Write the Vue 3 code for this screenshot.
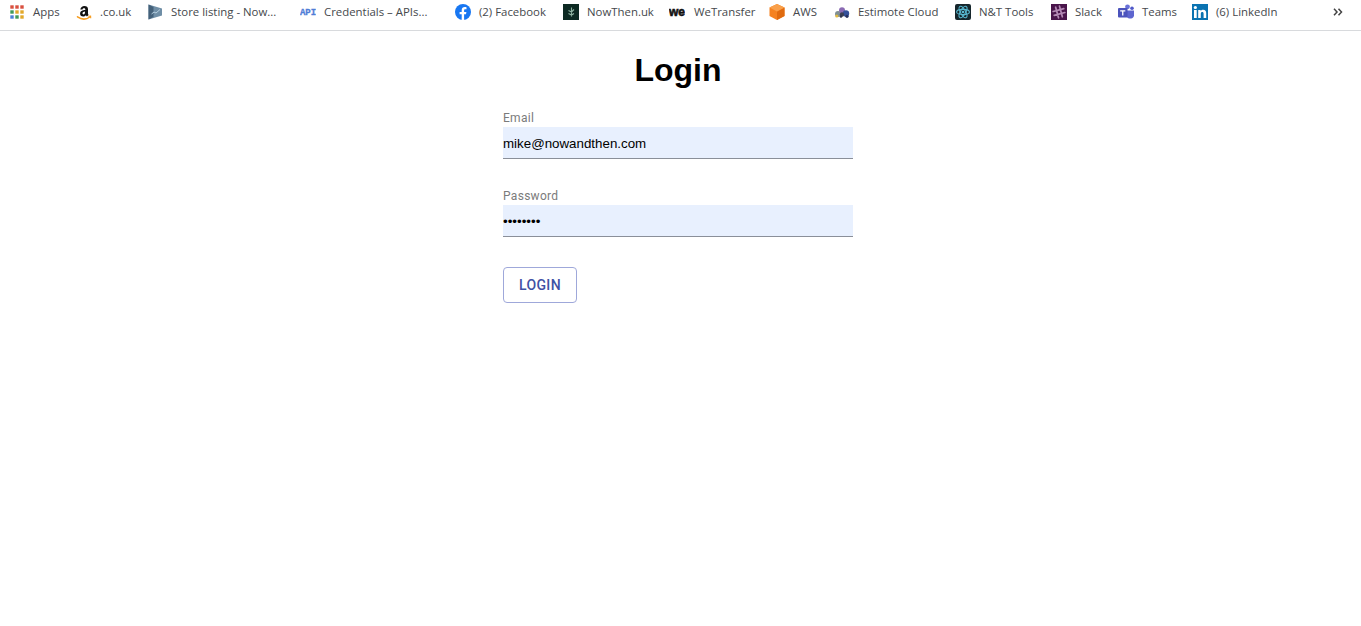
<script setup>
const items = [
  { icon: 'apps', label: 'Apps' },
  { icon: 'amazon', label: '.co.uk' },
  { icon: 'play', label: 'Store listing - Now...' },
  { icon: 'api', label: 'Credentials – APIs...' },
  { icon: 'fb', label: '(2) Facebook' },
  { icon: 'nt', label: 'NowThen.uk' },
  { icon: 'we', label: 'WeTransfer' },
  { icon: 'aws', label: 'AWS' },
  { icon: 'est', label: 'Estimote Cloud' },
  { icon: 'react', label: 'N&T Tools' },
  { icon: 'slack', label: 'Slack' },
  { icon: 'teams', label: 'Teams' },
  { icon: 'li', label: '(6) LinkedIn' }
]
const appDots = ['#d9503f','#d9503f','#d9503f','#3f9a5a','#e2a92b','#e2a92b','#4a82d8','#3f9a5a','#e2a92b']
</script>

<template>
  <div class="page">
    <nav class="bar">
      <div v-for="it in items" :key="it.label" class="mark" :class="'m-' + it.icon">
        <svg class="ic" viewBox="0 0 16 16" width="16" height="16">
          <template v-if="it.icon === 'apps'">
            <rect v-for="(c, i) in appDots" :key="i" :x="1.3 + (i % 3) * 5" :y="1.3 + Math.floor(i / 3) * 5" width="3.4" height="3.4" :fill="c" />
          </template>
          <template v-else-if="it.icon === 'amazon'">
            <path d="M4.300 5.600C4.700 3.300 6.300 2 8.300 2c2.400 0 3.700 1.200 3.700 3.200v4.300c0 .7.200 1 .6 1.500l-1.700 1.400c-.5-.4-.8-.8-1-1.200-.8.900-1.600 1.300-2.800 1.300-1.800 0-3-1.100-3-2.800 0-2.600 2.400-3.400 5.200-3.600v-.5c0-.9-.4-1.400-1.300-1.400-.8 0-1.400.5-1.500 1.300zM9 7.500c-1.300.1-2.500.5-2.500 1.700 0 .7.400 1.200 1 1.200 1 0 1.500-1 1.500-2.400z" fill="#111"/>
            <path d="M1.500 12.800c3.800 2.700 8.800 2.800 12.400.2" fill="none" stroke="#f79c1d" stroke-width="1.500" stroke-linecap="round"/>
            <path d="M12.300 12.300l2.300-.3.100 2.200" fill="none" stroke="#f79c1d" stroke-width="1.100"/>
          </template>
          <template v-else-if="it.icon === 'play'">
            <path d="M1.500 .5L15 4.500v7L1.500 15.500z" fill="#6f8ea6"/>
            <path d="M1.500 .5L6.500 3v10L1.500 15.500z" fill="#44617a"/>
            <path d="M4.500 10l2.500-2 2 1 4-3.500" fill="none" stroke="#b5cfe0" stroke-width="1"/>
          </template>
          <template v-else-if="it.icon === 'api'">
            <text x="8" y="11.300" text-anchor="middle" class="api">API</text>
          </template>
          <template v-else-if="it.icon === 'fb'">
            <circle cx="8" cy="8" r="8" fill="#1877f2"/>
            <path d="M9.100 16V10.300H11l.4-2.300H9.100V6.500c0-.7.3-1.200 1.300-1.200h1.100V3.300c-.5-.1-1.100-.2-1.700-.2-1.900 0-3.100 1.100-3.100 3.200V8H4.600v2.300h2.100V16z" fill="#fff"/>
          </template>
          <template v-else-if="it.icon === 'nt'">
            <rect width="16" height="16" fill="#0d2a23"/>
            <path d="M8.500 3.500v9M5.500 6.500l3 1.500 2.500-2.500M5.500 9.500l3 1.500 2.500-1.500" fill="none" stroke="#8fb3a2" stroke-width="1.100"/>
          </template>
          <template v-else-if="it.icon === 'we'">
            <text x="0" y="12" class="we">we</text>
          </template>
          <template v-else-if="it.icon === 'aws'">
            <path d="M8 0l7.500 3.500v8.500L8 16 .5 12V3.500z" fill="#f58220"/>
            <path d="M8 7.500L15.500 3.500v8.500L8 16z" fill="#e06b10"/>
            <path d="M8 0l7.500 3.500L8 7.500.5 3.500z" fill="#f9a04b"/>
          </template>
          <template v-else-if="it.icon === 'est'">
            <circle cx="4" cy="10" r="3" fill="#7f8f93"/>
            <circle cx="8" cy="6.200" r="3" fill="#8a6ab3"/>
            <circle cx="12" cy="9.500" r="3.200" fill="#34509a"/>
            <circle cx="8" cy="10.500" r="2.200" fill="#3b3f55"/>
            <circle cx="2.800" cy="12" r="1.600" fill="#e0b940"/>
            <circle cx="13" cy="12.300" r="1.600" fill="#26315f"/>
            <circle cx="7" cy="12.500" r="1.300" fill="#30364f"/>
          </template>
          <template v-else-if="it.icon === 'react'">
            <rect width="16" height="16" rx="2" fill="#17272d"/>
            <g fill="none" stroke="#58b8d0" stroke-width="1.100">
              <ellipse cx="8" cy="8" rx="6.400" ry="2.600"/>
              <ellipse cx="8" cy="8" rx="6.400" ry="2.600" transform="rotate(60 8 8)"/>
              <ellipse cx="8" cy="8" rx="6.400" ry="2.600" transform="rotate(120 8 8)"/>
            </g>
            <circle cx="8" cy="8" r="1.300" fill="#58b8d0"/>
          </template>
          <template v-else-if="it.icon === 'slack'">
            <rect width="16" height="16" fill="#4a154b"/>
            <g stroke="#b48ab5" stroke-width="1.700" stroke-linecap="round" transform="rotate(-15 8 8)">
              <path d="M6 2.500v11M10 2.500v11M2.500 6h11M2.500 10h11"/>
            </g>
          </template>
          <template v-else-if="it.icon === 'teams'">
            <circle cx="9.500" cy="2.800" r="2.400" fill="#6a72d8"/>
            <circle cx="14" cy="4.300" r="1.800" fill="#5059c9"/>
            <path d="M8 6.500h8v4.700c0 1.800-1.400 3.300-3 3.300h-1.500C10 14.500 8 13 8 11z" fill="#5d65cf"/>
            <rect x="0" y="4" width="9.500" height="9.500" rx="1" fill="#4b53bc"/>
            <path d="M2.200 6.200h5.100v1.200H5.400v4.100H4.100V7.400H2.200z" fill="#fff"/>
          </template>
          <template v-else-if="it.icon === 'li'">
            <rect width="16" height="16" fill="#0a73b1"/>
            <rect x="2" y="6" width="2.700" height="8" fill="#fff"/>
            <circle cx="3.350" cy="3.500" r="1.600" fill="#fff"/>
            <path d="M6.200 6h2.500v1.100c.5-.8 1.400-1.300 2.500-1.300 2.200 0 3 1.300 3 3.500V14h-2.600V9.700c0-1-.4-1.600-1.300-1.600-1 0-1.500.7-1.500 1.700V14H6.200z" fill="#fff"/>
          </template>
        </svg>
        <span class="label">{{ it.label }}</span>
      </div>
      <svg class="more" viewBox="0 0 10 8" width="10" height="8">
        <path d="M1 .8L4 4 1 7.200M5.500 .8L8.500 4 5.500 7.200" fill="none" stroke="#444" stroke-width="1.500"/>
      </svg>
    </nav>

    <main class="login">
      <h1 class="title">Login</h1>
      <form class="form" @submit.prevent>
        <label class="field field-email">
          <span class="cap">Email</span>
          <input class="inp" type="text" value="mike@nowandthen.com" />
        </label>
        <label class="field">
          <span class="cap">Password</span>
          <input class="inp" type="password" value="password" />
        </label>
        <button class="btn" type="button">LOGIN</button>
      </form>
    </main>
  </div>
</template>

<style>
html, body { margin: 0; background: #fff; overflow: hidden; }
</style>

<style scoped>
.page { width: 1361px; height: 626px; background: #fff; }
.bar {
  height: 30px;
  border-bottom: 1px solid #d8dadd;
  display: flex;
  align-items: flex-start;
  font-family: "Open Sans", sans-serif;
  font-size: 11.4px;
  color: #45484c;
}
.mark { display: flex; align-items: center; height: 24px; white-space: nowrap; }
.ic { flex: none; margin-right: 8px; }
.api { font-family: "Liberation Mono", monospace; font-weight: 700; font-size: 9px; fill: #4f7dd6; stroke: #4f7dd6; stroke-width: .3px; }
.we { font-family: "Liberation Sans", sans-serif; font-weight: 700; font-size: 12px; fill: #111; stroke: #111; stroke-width: .6px; }
.label { display: block; margin-bottom: 2px; }
.m-apps { margin-left: 9px; width: 67px; }
.m-amazon { width: 71px; }
.m-play { width: 153px; }
.m-api { width: 155px; }
.m-fb { width: 108px; }
.m-nt { width: 106px; }
.m-we { width: 100px; }
.m-we .ic { margin-right: 9px; }
.m-aws { width: 65px; }
.m-est { width: 121px; }
.m-react { width: 96px; }
.m-slack { width: 67px; }
.m-teams { width: 74px; }
.m-li { width: 100px; }
.more { margin: 8px 0 0 41px; flex: none; }
.login { width: 350px; margin-left: 503px; }
.title {
  margin: 21px 0 0;
  height: 36px;
  line-height: 36px;
  text-align: center;
  font-family: "Liberation Sans", Arial, sans-serif;
  font-weight: 700;
  font-size: 32px;
  color: #000;
}
.form { display: flex; flex-direction: column; margin-top: 21px; }
.field { display: flex; flex-direction: column; margin-bottom: 29px; }
.field-email { margin-bottom: 28px; }
.cap {
  font-family: Roboto, sans-serif;
  font-size: 12px;
  line-height: 18px;
  letter-spacing: .3px;
  color: #7b7b7b;
}
.inp {
  box-sizing: border-box;
  width: 350px;
  height: 32px;
  border: 0;
  border-bottom: 1px solid #8a8f99;
  border-radius: 0;
  background: #e8f0fe;
  padding: 1px 0 0;
  outline: none;
  font-family: "Liberation Sans", Arial, sans-serif;
  font-size: 13.333px;
  color: #000;
}
.btn {
  align-self: flex-start;
  margin-top: 1px;
  box-sizing: border-box;
  width: 74px;
  height: 36px;
  border: 1px solid #9fa8da;
  border-radius: 4px;
  background: #fff;
  padding: 0;
  font-family: Roboto, sans-serif;
  font-weight: 500;
  font-size: 14px;
  letter-spacing: .35px;
  color: #3f51a5;
}
</style>
